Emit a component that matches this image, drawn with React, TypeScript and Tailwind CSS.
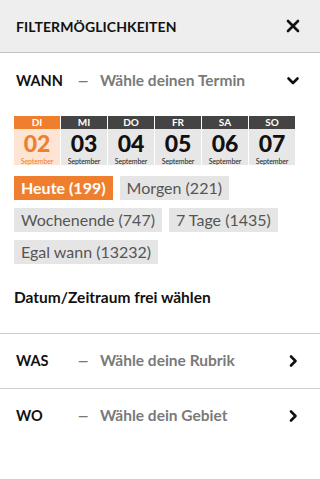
import React from 'react';

const days = [
  { d: 'DI', n: '02', active: true },
  { d: 'MI', n: '03' },
  { d: 'DO', n: '04' },
  { d: 'FR', n: '05' },
  { d: 'SA', n: '06' },
  { d: 'SO', n: '07' },
];

const chips = [
  { label: 'Heute (199)', active: true },
  { label: 'Morgen (221)' },
  { label: 'Wochenende (747)' },
  { label: '7 Tage (1435)' },
  { label: 'Egal wann (13232)' },
];

const ChevronDown = () => (
  <svg width="14" height="14" viewBox="0 0 14 14" fill="none">
    <path d="M2.5 4.5 L7 9 L11.5 4.5" stroke="#111" strokeWidth="2.6" strokeLinecap="round" strokeLinejoin="round" />
  </svg>
);

const ChevronRight = () => (
  <svg width="14" height="14" viewBox="0 0 14 14" fill="none">
    <path d="M5 2.5 L9.5 7 L5 11.5" stroke="#111" strokeWidth="2.6" strokeLinecap="round" strokeLinejoin="round" />
  </svg>
);

const Row: React.FC<{ label: string; hint: string; open?: boolean; tall?: boolean }> = ({ label, hint, open, tall }) => (
  <div className={(tall ? 'h-[56px]' : 'h-[54px]') + ' flex items-center pl-4 pr-[20px]'}>
    <span className="w-[62px] text-[14.5px] font-bold text-[#111]">{label}</span>
    <span className="w-[22px] text-[13px] leading-none font-bold text-[#777]">—</span>
    <span className="flex-1 text-[15.5px] font-bold text-[#7a7a7a]">{hint}</span>
    {open ? <ChevronDown /> : <ChevronRight />}
  </div>
);

export default function App() {
  return (
    <div className="w-[320px] h-[480px] bg-white font-['Lato',sans-serif] flex flex-col overflow-hidden">
      {/* Kopf */}
      <div className="h-[53px] shrink-0 bg-[#eeeeee] border-b border-[#c4c4c4] flex items-center justify-between pl-4 pr-[20px]">
        <span className="text-[14px] font-bold text-[#111] tracking-[0.1px]">FILTERMÖGLICHKEITEN</span>
        <svg width="14" height="14" viewBox="0 0 14 14" fill="none">
          <path d="M2 2 L12 12 M12 2 L2 12" stroke="#111" strokeWidth="2.6" strokeLinecap="round" />
        </svg>
      </div>

      {/* WANN */}
      <div className="border-b border-[#cfcfcf]">
        <Row label="WANN" hint="Wähle deinen Termin" open tall />

        <div className="mt-[7px] ml-[14px] flex gap-px">
          {days.map(day => (
            <div key={day.d} className="w-[46px] flex flex-col">
              <div
                className={
                  'h-[13px] flex items-center justify-center text-[10px] font-bold text-white ' +
                  (day.active ? 'bg-[#ef7f2f]' : 'bg-[#444444]')
                }
              >
                {day.d}
              </div>
              <div
                className={
                  'h-[36px] flex flex-col items-center ' +
                  (day.active ? 'bg-[#fde4d3]' : 'bg-[#e7e7e7]')
                }
              >
                <span
                  className={
                    'text-[23px] leading-[28px] font-black ' + (day.active ? 'text-[#ef7f2f]' : 'text-[#111]')
                  }
                >
                  {day.n}
                </span>
                <span
                  className={
                    'text-[7px] leading-[8px] tracking-[-0.1px] ' + (day.active ? 'text-[#ef7f2f]' : 'text-[#222]')
                  }
                >
                  September
                </span>
              </div>
            </div>
          ))}
        </div>

        <div className="mt-[11px] px-[14px] flex flex-wrap gap-x-[7px] gap-y-[8px]">
          {chips.map(c => (
            <span
              key={c.label}
              className={
                'h-[24px] px-[7px] flex items-center text-[16px] ' +
                (c.active ? 'bg-[#ef7f2f] text-white font-bold' : 'bg-[#e5e5e5] text-[#555]')
              }
            >
              {c.label}
            </span>
          ))}
        </div>

        <div className="mt-[23px] mb-[26px] px-[14px] text-[15.5px] leading-[20px] font-bold text-[#111]">
          Datum/Zeitraum frei wählen
        </div>
      </div>

      {/* WAS */}
      <div className="border-b border-[#cfcfcf]">
        <Row label="WAS" hint="Wähle deine Rubrik" />
      </div>

      {/* WO */}
      <div className="flex-1 border-b border-[#cfcfcf]">
        <Row label="WO" hint="Wähle dein Gebiet" />
      </div>
    </div>
  );
}
